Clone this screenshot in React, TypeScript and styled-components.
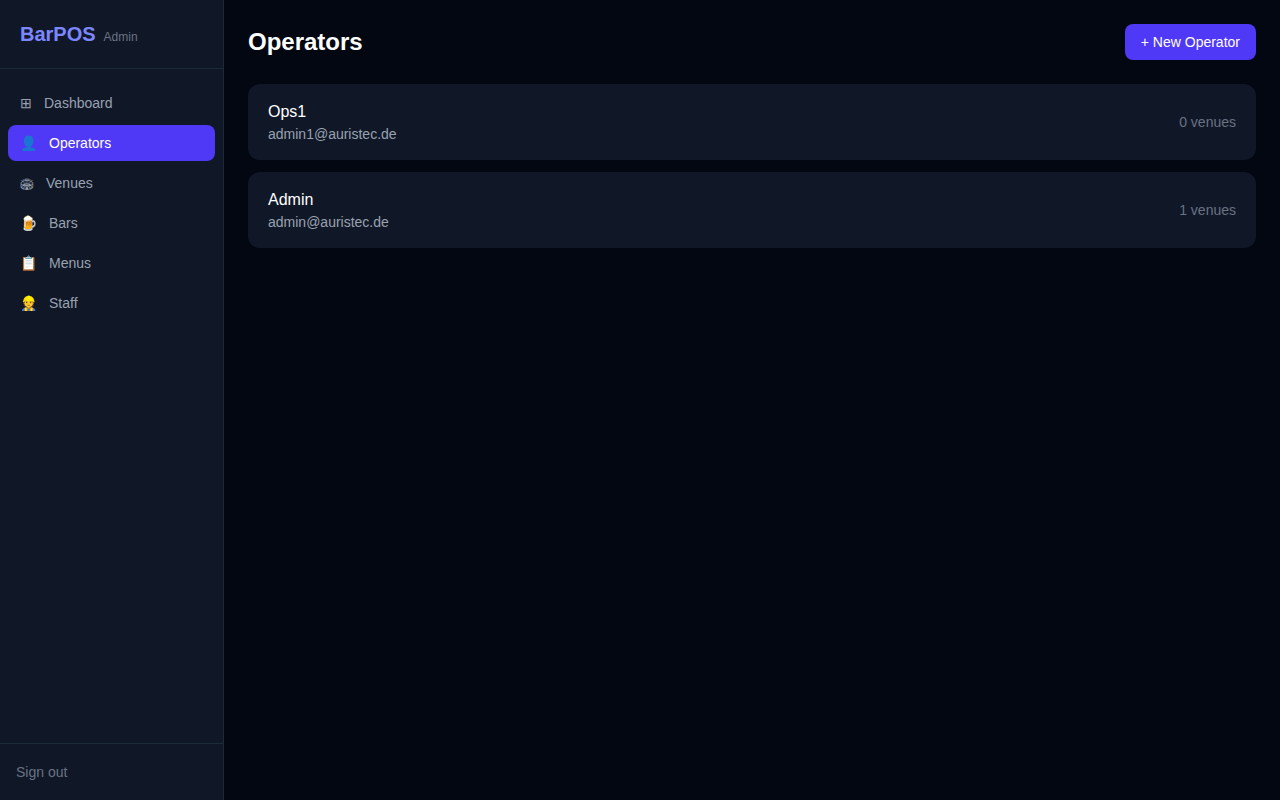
import React from "react";
import styled, { createGlobalStyle } from "styled-components";

const Global = createGlobalStyle`
  html, body { margin: 0; padding: 0; background: #030712; }
  body { font-family: "Liberation Sans", Arial, sans-serif; color: #fff; }
  * { box-sizing: border-box; }
`;
const Shell = styled.div`display: flex; height: 800px; width: 1280px; background: #030712;`;
const Sidebar = styled.aside`width: 224px; flex: none; display: flex; flex-direction: column; background: #101828; border-right: 1px solid #1e2939;`;
const Brand = styled.div`height: 69px; padding: 20px; border-bottom: 1px solid #1e2939; display: flex; align-items: baseline; gap: 8px;`;
const Logo = styled.span`font-size: 20px; line-height: 28px; font-weight: 700; color: #7c86ff;`;
const Tag = styled.span`font-size: 12px; line-height: 16px; color: #6a7282;`;
const Nav = styled.nav`flex: 1; padding: 16px 8px; display: flex; flex-direction: column; gap: 4px;`;
const NavItem = styled.a<{ $active?: boolean }>`
  height: 36px; display: flex; align-items: center; gap: 12px; padding: 0 12px; border-radius: 8px; font-size: 14px;
  color: ${p => p.$active ? "#fff" : "#99a1af"}; background: ${p => p.$active ? "#4f39f6" : "transparent"};
`;
const NavIcon = styled.span<{ $wide?: boolean }>`
  display: inline-block;
  font-size: ${p => p.$wide ? "11px" : "14px"};
  ${p => p.$wide ? "transform: translateY(1px) scaleX(1.12);" : ""}
`;
const Foot = styled.div`height: 57px; border-top: 1px solid #1e2939; padding: 0 16px; display: flex; align-items: center; font-size: 14px; color: #6a7282;`;
const Main = styled.main`flex: 1; padding: 24px;`;
const Header = styled.header`display: flex; justify-content: space-between; align-items: center; margin-bottom: 24px;`;
const Title = styled.h1`margin: 0; font-size: 24px; line-height: 32px; font-weight: 700; color: #fff;`;
const Primary = styled.button`height: 36px; padding: 0 16px; border: 0; border-radius: 8px; background: #4f39f6; color: #fff; font: 14px "Liberation Sans", Arial, sans-serif;`;
const List = styled.div`display: flex; flex-direction: column; gap: 12px;`;
const Card = styled.div`height: 76px; padding: 0 20px; border-radius: 12px; background: #101828; display: flex; justify-content: space-between; align-items: center;`;
const Name = styled.div`font-size: 16px; line-height: 24px; color: #fff;`;
const Email = styled.div`font-size: 14px; line-height: 20px; color: #99a1af;`;
const Count = styled.div`font-size: 14px; color: #6a7282;`;

const nav = [["⊞","Dashboard"],["👤","Operators"],["🏟","Venues"],["🍺","Bars"],["📋","Menus"],["👷","Staff"]];
const ops = [["Ops1","admin1@auristec.de","0 venues"],["Admin","admin@auristec.de","1 venues"]];

export default function App() {
  return (
    <Shell>
      <Global />
      <Sidebar>
        <Brand><Logo>BarPOS</Logo><Tag>Admin</Tag></Brand>
        <Nav>{nav.map(([i,l]) => <NavItem key={l} $active={l==="Operators"}><NavIcon $wide={l==="Venues"}>{i}</NavIcon><span>{l}</span></NavItem>)}</Nav>
        <Foot>Sign out</Foot>
      </Sidebar>
      <Main>
        <Header><Title>Operators</Title><Primary>+ New Operator</Primary></Header>
        <List>{ops.map(([n,e,c]) => <Card key={n}><div><Name>{n}</Name><Email>{e}</Email></div><Count>{c}</Count></Card>)}</List>
      </Main>
    </Shell>
  );
}
